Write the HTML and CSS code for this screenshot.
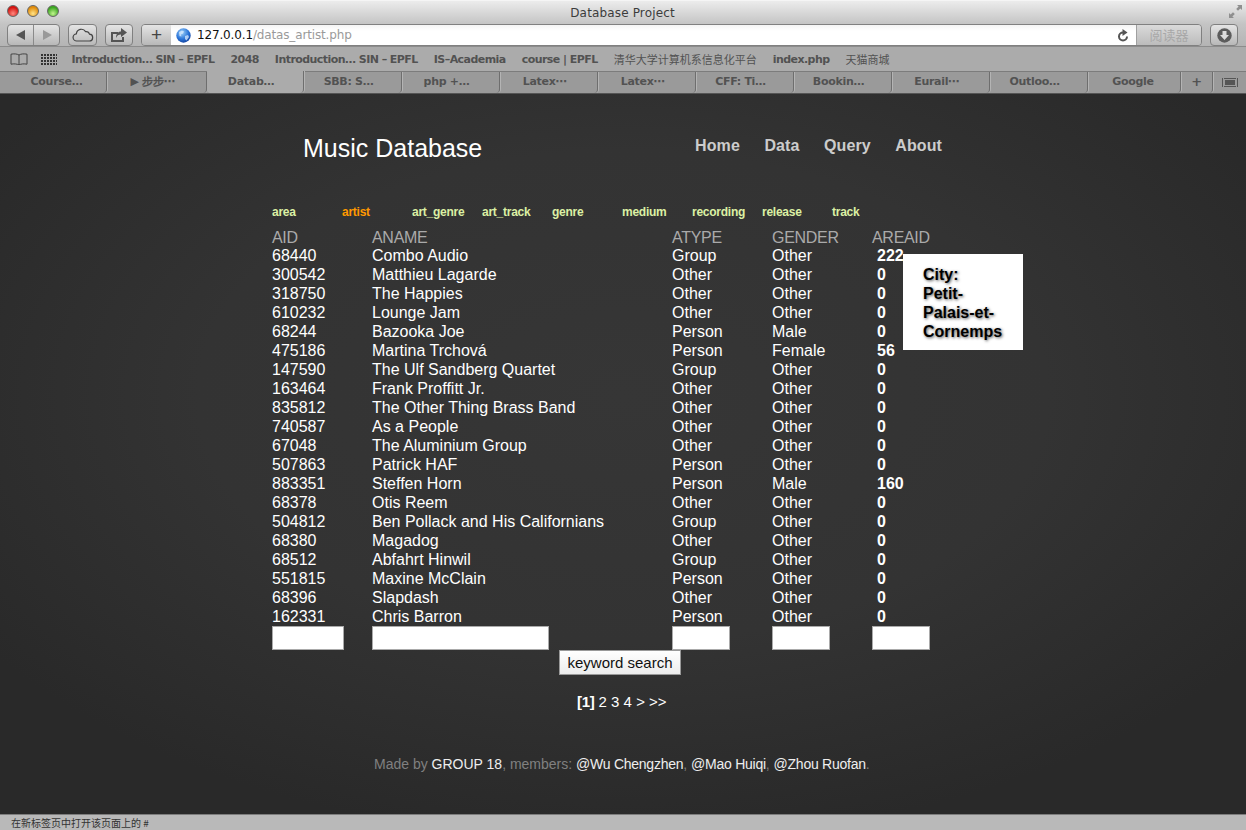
FILE: index.html
```html
<!DOCTYPE html>
<html lang="en">
<head>
  <meta charset="UTF-8">
  <title>Database Project</title>
  <link rel="stylesheet" href="styles.css">
</head>
<body>
  <div class="titlebar">
    <div class="lights">
      <span class="light red"></span>
      <span class="light yellow"></span>
      <span class="light green"></span>
    </div>
    <div class="window-title">Database Project</div>
    <svg class="fullscreen" width="15" height="15" viewBox="0 0 15 15"><path d="M9 1h5v5l-1.600-1.600-2.400 2.400-1.800-1.800 2.400-2.400zM6 14H1V9l1.600 1.600 2.400-2.400 1.800 1.800-2.400 2.400z" fill="#8f8f8f"/></svg>
  </div>

  <div class="toolbar">
    <div class="tool backforward">
      <span class="half"><svg width="10" height="10" viewBox="0 0 10 10"><path d="M9 0v10L0 5z" fill="#555"/></svg></span>
      <span class="half"><svg width="10" height="10" viewBox="0 0 10 10"><path d="M1 0v10l9-5z" fill="#999"/></svg></span>
    </div>
    <div class="tool small-tool">
      <svg width="22" height="14" viewBox="0 0 22 14"><path d="M5 13a3.600 3.600 0 0 1-.6-7.200A5 5 0 0 1 13.600 3.600a3.600 3.600 0 0 1 3.900 2.600A3.400 3.400 0 0 1 17 13z" fill="none" stroke="#444" stroke-width="1.200"/></svg>
    </div>
    <div class="tool small-tool">
      <svg width="18" height="14" viewBox="0 0 18 14"><path d="M1 4h7v2H3v6h9V9h2v5H1z" fill="#555"/><path d="M11 0l6 4.500-6 4.500V6.500C8.500 6.500 7 7.500 6 10c0-4 2-6.500 5-6.500z" fill="#555"/></svg>
    </div>
    <div class="address">
      <span class="plus">+</span>
      <div class="url-field">
        <svg class="globe" width="15" height="15" viewBox="0 0 15 15"><defs><radialGradient id="sea" cx="40%" cy="30%" r="75%"><stop offset="0" stop-color="#9cd0f8"/><stop offset="0.6" stop-color="#2a74d8"/><stop offset="1" stop-color="#123f9a"/></radialGradient></defs><circle cx="7.500" cy="7.500" r="7.200" fill="url(#sea)"/><path d="M3 4l3-1.500 2 1-1 2-2 1 .5 2L3.500 8zM9 8l3-1 1 2-2.500 3.500L9 11z" fill="#dcecff" opacity=".75"/></svg>
        <span class="host">127.0.0.1</span><span class="path">/datas_artist.php</span>
        <svg class="reload" width="12" height="13" viewBox="0 0 12 13"><path d="M10 7.500a4 4 0 1 1-4-4" fill="none" stroke="#555" stroke-width="2"/><path d="M5.500 0l5 3.500-5 3.500z" fill="#555"/></svg>
      </div>
      <span class="reader">阅读器</span>
    </div>
    <div class="tool download">
      <svg width="15" height="15" viewBox="0 0 15 15"><circle cx="7.500" cy="7.500" r="7.200" fill="#5c5c5c"/><path d="M5.500 3h4v4h2.500l-4.500 5L3 7h2.500z" fill="#ddd"/></svg>
    </div>
  </div>

  <div class="bookmarks">
    <svg class="book" width="18" height="12" viewBox="0 0 18 12"><path d="M9 2C7 .8 4 .6 1 1.200v10c3-.6 6-.4 8 .8 2-1.200 5-1.400 8-.8v-10C14 .6 11 .8 9 2zv10" fill="none" stroke="#444"/></svg>
    <span class="grid-icon"></span>
    <a class="mark mark-first">Introduction… SIN – EPFL</a>
    <a class="mark">2048</a>
    <a class="mark">Introduction… SIN – EPFL</a>
    <a class="mark">IS–Academia</a>
    <a class="mark">course | EPFL</a>
    <a class="mark mark-cn">清华大学计算机系信息化平台</a>
    <a class="mark">index.php</a>
    <a class="mark mark-cn">天猫商城</a>
  </div>

  <div class="tabs">
    <div class="tab tab-first">Course…</div>
    <div class="tab">▶ 步步⋯</div>
    <div class="tab tab-active">Datab…</div>
    <div class="tab">SBB: S…</div>
    <div class="tab">php +…</div>
    <div class="tab">Latex⋯</div>
    <div class="tab">Latex⋯</div>
    <div class="tab">CFF: Ti…</div>
    <div class="tab">Bookin…</div>
    <div class="tab">Eurail⋯</div>
    <div class="tab">Outloo…</div>
    <div class="tab tab-google">Google</div>
    <div class="tab tab-plus">+</div>
    <div class="tab-end"><svg width="16" height="9" viewBox="0 0 16 9"><path d="M0 0h1v9H0zM15 0h1v9h-1zM2 0h12v1H2zM2 8h12v1H2zM3 2h10v5H3z" fill="#555"/></svg></div>
  </div>

  <div class="page">
    <div class="wrap">
      <header class="site-head">
        <h1>Music Database</h1>
        <nav class="site-nav">
          <a>Home</a>
          <a>Data</a>
          <a>Query</a>
          <a>About</a>
        </nav>
      </header>

      <div class="table-nav">
        <a>area</a>
        <a class="current">artist</a>
        <a>art_genre</a>
        <a>art_track</a>
        <a>genre</a>
        <a>medium</a>
        <a>recording</a>
        <a>release</a>
        <a>track</a>
      </div>

      <div class="table-box">
        <table class="data">
          <thead>
            <tr><th>AID</th><th>ANAME</th><th>ATYPE</th><th>GENDER</th><th>AREAID</th></tr>
          </thead>
          <tbody>
            <tr><td>68440</td><td>Combo Audio</td><td>Group</td><td>Other</td><td class="area">222</td></tr>
            <tr><td>300542</td><td>Matthieu Lagarde</td><td>Other</td><td>Other</td><td class="area">0</td></tr>
            <tr><td>318750</td><td>The Happies</td><td>Other</td><td>Other</td><td class="area">0</td></tr>
            <tr><td>610232</td><td>Lounge Jam</td><td>Other</td><td>Other</td><td class="area">0</td></tr>
            <tr><td>68244</td><td>Bazooka Joe</td><td>Person</td><td>Male</td><td class="area">0</td></tr>
            <tr><td>475186</td><td>Martina Trchová</td><td>Person</td><td>Female</td><td class="area">56</td></tr>
            <tr><td>147590</td><td>The Ulf Sandberg Quartet</td><td>Group</td><td>Other</td><td class="area">0</td></tr>
            <tr><td>163464</td><td>Frank Proffitt Jr.</td><td>Other</td><td>Other</td><td class="area">0</td></tr>
            <tr><td>835812</td><td>The Other Thing Brass Band</td><td>Other</td><td>Other</td><td class="area">0</td></tr>
            <tr><td>740587</td><td>As a People</td><td>Other</td><td>Other</td><td class="area">0</td></tr>
            <tr><td>67048</td><td>The Aluminium Group</td><td>Other</td><td>Other</td><td class="area">0</td></tr>
            <tr><td>507863</td><td>Patrick HAF</td><td>Person</td><td>Other</td><td class="area">0</td></tr>
            <tr><td>883351</td><td>Steffen Horn</td><td>Person</td><td>Male</td><td class="area">160</td></tr>
            <tr><td>68378</td><td>Otis Reem</td><td>Other</td><td>Other</td><td class="area">0</td></tr>
            <tr><td>504812</td><td>Ben Pollack and His Californians</td><td>Group</td><td>Other</td><td class="area">0</td></tr>
            <tr><td>68380</td><td>Magadog</td><td>Other</td><td>Other</td><td class="area">0</td></tr>
            <tr><td>68512</td><td>Abfahrt Hinwil</td><td>Group</td><td>Other</td><td class="area">0</td></tr>
            <tr><td>551815</td><td>Maxine McClain</td><td>Person</td><td>Other</td><td class="area">0</td></tr>
            <tr><td>68396</td><td>Slapdash</td><td>Other</td><td>Other</td><td class="area">0</td></tr>
            <tr><td>162331</td><td>Chris Barron</td><td>Person</td><td>Other</td><td class="area">0</td></tr>
          </tbody>
        </table>
        <div class="tooltip">City:<br>Petit-<br>Palais-et-<br>Cornemps</div>
      </div>

      <form class="search">
        <div class="search-inputs">
          <input class="in-aid" type="text">
          <input class="in-name" type="text">
          <input class="in-short" type="text">
          <input class="in-short" type="text">
          <input class="in-short" type="text">
        </div>
        <button class="search-btn" type="button">keyword search</button>
      </form>

      <div class="pager"><b>[1]</b> 2 3 4 &gt; &gt;&gt;</div>

      <footer class="site-foot">Made by <a>GROUP 18</a>, members: <a>@Wu Chengzhen</a>, <a>@Mao Huiqi</a>, <a>@Zhou Ruofan</a>.</footer>
    </div>
  </div>

  <div class="statusbar">在新标签页中打开该页面上的 #</div>
</body>
</html>
```

FILE: styles.css
```css
* {
  box-sizing: border-box;
}
html, body {
  margin: 0;
  height: 830px;
  overflow: hidden;
}
body {
  display: flex;
  flex-direction: column;
  font-family: "Liberation Sans", Arial, sans-serif;
}

/* browser chrome */
.titlebar {
  height: 24px;
  display: flex;
  align-items: center;
  justify-content: center;
  position: relative;
  background: linear-gradient(#ececec, #c4c4c4);
  border-top: 1px solid #f5f5f5;
}
.window-title {
  font-family: "DejaVu Sans", sans-serif;
  font-size: 12px;
  letter-spacing: 0.15px;
  color: #3c3c3c;
  margin-left: -1px;
}
.lights {
  position: absolute;
  left: 7px;
  top: 4px;
  display: flex;
  gap: 8px;
}
.light {
  width: 12px;
  height: 12px;
  border-radius: 50%;
  border: 1px solid #666;
}
.red { background: radial-gradient(circle at 50% 75%, #ff8a80, #d4100c 70%); }
.yellow { background: radial-gradient(circle at 50% 75%, #ffe48a, #e08a08 70%); }
.green { background: radial-gradient(circle at 50% 75%, #c2f58e, #38a41e 70%); }
.fullscreen {
  position: absolute;
  right: 3px;
  top: 3px;
}
.toolbar {
  height: 22px;
  display: flex;
  align-items: center;
  padding-left: 7px;
  background: linear-gradient(#c4c4c4, #b4b4b4);
}
.tool {
  height: 22px;
  display: flex;
  align-items: center;
  justify-content: center;
  border: 1px solid #808080;
  border-radius: 4px;
  background: linear-gradient(#e4e4e4, #b8b8b8);
}
.backforward {
  width: 53px;
}
.half {
  flex: 1;
  height: 100%;
  display: flex;
  align-items: center;
  justify-content: center;
}
.half + .half {
  border-left: 1px solid #8a8a8a;
}
.small-tool {
  width: 29px;
  margin-left: 8px;
}
.small-tool + .small-tool {
  margin-left: 8px;
  width: 28px;
}
.address {
  height: 22px;
  width: 1061px;
  margin-left: 8px;
  display: flex;
  align-items: stretch;
  border: 1px solid #808080;
  border-radius: 4px;
  overflow: hidden;
}
.plus {
  width: 29px;
  font-size: 19px;
  line-height: 19px;
  text-align: center;
  color: #444;
  background: linear-gradient(#e4e4e4, #b8b8b8);
}
.url-field {
  flex: 1;
  display: flex;
  align-items: center;
  padding-left: 5px;
  background: linear-gradient(#f4f4f4, #fff 30%);
  font-family: "DejaVu Sans", sans-serif;
  font-size: 12px;
  letter-spacing: -0.15px;
}
.globe {
  margin-right: 6px;
}
.host {
  color: #111;
}
.path {
  color: #9a9a9a;
}
.reload {
  margin-left: auto;
  margin-right: 7px;
}
.reader {
  width: 65px;
  text-align: center;
  font-family: "Noto Sans CJK SC", sans-serif;
  font-size: 13px;
  line-height: 19px;
  color: #a8a8a8;
  background: linear-gradient(#dadada, #bcbcbc);
  border-left: 1px solid #a0a0a0;
}
.download {
  width: 28px;
  margin-left: 8px;
}
.bookmarks {
  height: 25px;
  display: flex;
  align-items: center;
  padding-left: 10px;
  font-family: "DejaVu Sans", sans-serif;
  font-size: 11px;
  font-weight: bold;
  color: #525252;
  background: #ababab;
  border-top: 1px solid #8c8c8c;
}
.book {
  flex: none;
}
.grid-icon {
  width: 16px;
  height: 11px;
  margin-left: 13px;
  background: repeating-linear-gradient(90deg, #333 0 2px, transparent 2px 3px);
  border: 0;
  -webkit-mask: repeating-linear-gradient(#000 0 2px, transparent 2px 3px);
}
.mark {
  margin-left: 16px;
  white-space: nowrap;
  letter-spacing: -0.55px;
}
.mark-first {
  margin-left: 14.5px;
}
.mark-cn {
  font-family: "Noto Sans CJK SC", sans-serif;
  font-weight: normal;
  letter-spacing: 0;
}
.tabs {
  height: 23px;
  display: flex;
  background: #9a9a9a;
  border-top: 1px solid #7c7c7c;
  border-bottom: 1px solid #555;
  font-family: "DejaVu Sans", sans-serif;
  font-size: 11px;
  font-weight: bold;
  letter-spacing: -0.3px;
  color: #525252;
}
.tab {
  width: 98px;
  padding-right: 8px;
  text-align: center;
  line-height: 20px;
  white-space: nowrap;
  border-right: 1px solid #6e6e6e;
  border-radius: 0 0 4px 0;
  box-shadow: 1px 0 0 #b4b4b4;
}
.tab-first {
  width: 107px;
  padding: 0 0 0 7px;
}
.tab:nth-child(2) {
  width: 100px;
}
.tab-active {
  width: 97px;
  background: #ababab;
  border-radius: 0 0 4px 4px;
  margin-top: -1px;
  padding-top: 1px;
  height: 22px;
}
.tab-google {
  width: 93px;
  padding-right: 2px;
}
.tab-plus {
  width: 32px;
  padding: 0;
  font-size: 13px;
}
.tab-end {
  flex: 1;
  display: flex;
  align-items: center;
  justify-content: center;
}

/* page */
.page {
  flex: 1;
  background: radial-gradient(ellipse 62% 62% at 50% 42%, #363636 0%, #333 55%, #292929 100%);
  color: #fff;
}
.wrap {
  width: 700px;
  margin-left: 272px;
}
.site-head {
  height: 100px;
  display: flex;
  justify-content: space-between;
  padding: 37px 0 0 31px;
}
.site-head h1 {
  margin: 0;
  font-size: 25px;
  font-weight: normal;
  line-height: 34px;
}
.site-nav {
  display: flex;
  gap: 24.5px;
  padding: 6px 30px 0 0;
  font-size: 16px;
  font-weight: bold;
  letter-spacing: 0.1px;
  line-height: 18px;
  color: #ccc;
}
.table-nav {
  display: flex;
  height: 35px;
  padding-top: 11px;
  font-size: 12px;
  font-weight: bold;
  letter-spacing: -0.25px;
  line-height: 14px;
  color: #dcf0a4;
}
.table-nav a {
  width: 70px;
}
.table-nav .current {
  color: #ff9900;
}
.table-box {
  position: relative;
}
.data {
  width: 660px;
  table-layout: fixed;
  border-collapse: collapse;
  font-size: 16px;
  line-height: 19px;
}
.data th:nth-child(1) { width: 100px; }
.data th:nth-child(2) { width: 300px; }
.data th:nth-child(3) { width: 100px; }
.data th:nth-child(4) { width: 100px; }
.data th, .data td {
  padding: 0;
  text-align: left;
  white-space: nowrap;
}
.data th {
  font-weight: normal;
  color: #aaa;
  letter-spacing: -0.3px;
  line-height: 17px;
}
.data .area {
  padding-left: 5px;
  font-weight: bold;
}
.tooltip {
  position: absolute;
  left: 631px;
  top: 25px;
  width: 120px;
  height: 96px;
  padding: 11px 0 0 20px;
  background: #fff;
  color: #000;
  font-size: 16px;
  font-weight: bold;
  line-height: 19px;
  text-shadow: 1px 1px 3px #555;
}
.search-inputs {
  display: flex;
  height: 24px;
}
.search-inputs input {
  height: 24px;
  margin: 0 28px 0 0;
  padding: 0;
  border: 1px solid #aaa;
  border-radius: 0;
  background: #fff;
}
.in-aid { width: 72px; }
.search-inputs .in-name { width: 177px; margin-right: 123px; }
.search-inputs .in-short { width: 58px; margin-right: 42px; }
.search-btn {
  display: block;
  width: 122px;
  height: 25px;
  margin: 0 0 0 287px;
  padding: 0;
  border: 1px solid #999;
  border-radius: 0;
  background: linear-gradient(#fff, #ececec);
  font-family: "Liberation Sans", Arial, sans-serif;
  font-size: 15px;
  color: #111;
}
.pager {
  margin-top: 18px;
  padding-left: 305px;
  font-size: 15px;
  line-height: 18px;
  white-space: nowrap;
}
.pager b {
  letter-spacing: -0.3px;
}
.site-foot {
  margin-top: 44px;
  padding-left: 102px;
  font-size: 14px;
  line-height: 18px;
  color: #808080;
  white-space: nowrap;
}
.site-foot a {
  color: #eee;
  letter-spacing: -0.25px;
}
.site-foot a:first-child {
  letter-spacing: 0;
}
.statusbar {
  height: 16px;
  padding-left: 11px;
  font-family: "Noto Sans CJK SC", sans-serif;
  font-size: 10px;
  line-height: 15px;
  color: #333;
  background: #b9b9b9;
  border-top: 1px solid #7d7d7d;
}
```
